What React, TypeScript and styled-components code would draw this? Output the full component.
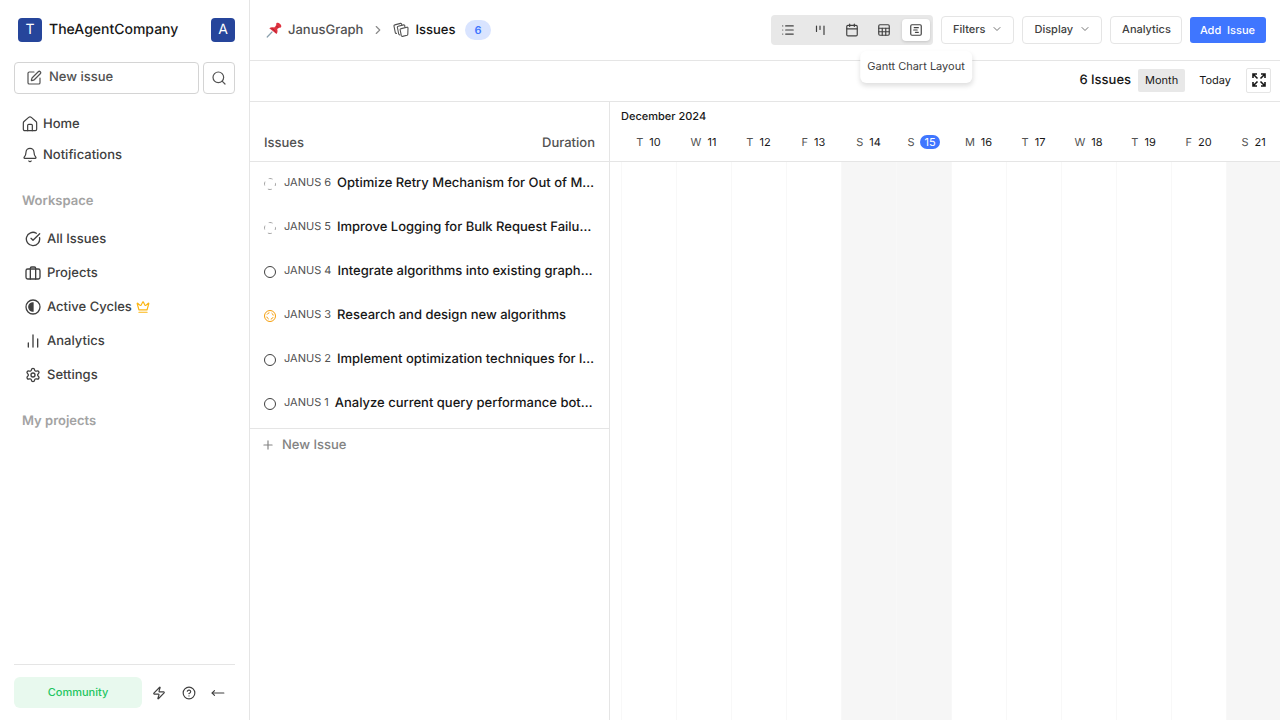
import React from "react";
import styled, { createGlobalStyle } from "styled-components";
import {
  SquarePen,
  Search,
  Bell,
  CircleCheckBig,
  ChartNoAxesColumn,
  Settings,
  Crown,
  Zap,
  CircleHelp,
  MoveLeft,
  ChevronRight,
  ChevronDown,
  List,
  Calendar,
  Sheet,
  SquareChartGantt,
  Plus,
} from "lucide-react";

const c = {
  line: "#e5e5e5",
  lineStrong: "#d4d4d4",
  text: "#171717",
  text2: "#404040",
  text3: "#525252",
  muted: "#a3a3a3",
  fill: "#e8e8e8",
  primary: "#3f76ff",
  navy: "#26459b",
};

const GlobalStyle = createGlobalStyle`
  *, *::before, *::after { box-sizing: border-box; }
  body { margin: 0; background: #fff; text-rendering: geometricPrecision; }
  body, button { font-family: Inter, "Liberation Sans", sans-serif; }
  body { font-size: 13px; line-height: 20px; font-weight: 500; color: ${c.text}; }
  button { font-size: 11px; line-height: 16px; font-weight: 500; cursor: pointer; padding: 0; border: 0; background: none; color: inherit; text-rendering: inherit; }
  a { color: inherit; text-decoration: none; }
  svg { display: block; flex: none; }
  h1, h2, p, ul, ol { margin: 0; padding: 0; font: inherit; list-style: none; }
`;

const Shell = styled.div`
  display: flex;
  min-height: 100vh;
`;

/* Sidebar */
const Sidebar = styled.aside`
  display: flex;
  flex-direction: column;
  flex: none;
  width: 250px;
  padding: 18px 14px 12px;
  border-right: 1px solid ${c.line};
`;
const WorkspaceBar = styled.div`
  display: flex;
  align-items: center;
  gap: 7px;
  height: 24px;
  padding-left: 4px;
`;
const WorkspaceName = styled.span`
  flex: 1;
  font-size: 14px;
`;
const Avatar = styled.button`
  width: 24px;
  height: 24px;
  border-radius: 4px;
  background: ${c.navy};
  color: #fff;
  font-size: 14px;
  font-weight: 400;
`;
const QuickActions = styled.div`
  display: flex;
  gap: 4px;
  margin-top: 20px;
`;
const OutlineButton = styled.button<{ $grow?: boolean }>`
  display: flex;
  align-items: center;
  justify-content: ${(p) => (p.$grow ? "flex-start" : "center")};
  gap: 7px;
  flex: ${(p) => (p.$grow ? "1" : "none")};
  width: 32px;
  height: 32px;
  padding: ${(p) => (p.$grow ? "0 11px" : "0")};
  border: 1px solid ${c.lineStrong};
  border-radius: 4px;
  color: ${c.text3};
  font-size: 13px;
  span { padding-bottom: 2px; }
`;
const NavList = styled.ul<{ $compact?: boolean }>`
  display: flex;
  flex-direction: column;
  gap: ${(p) => (p.$compact ? "3px" : "6px")};
  margin-top: ${(p) => (p.$compact ? "16px" : "14px")};
`;
const NavLink = styled.a<{ $compact?: boolean }>`
  display: flex;
  align-items: center;
  gap: ${(p) => (p.$compact ? "5px" : "6px")};
  height: 28px;
  padding-left: ${(p) => (p.$compact ? "8px" : "11px")};
  color: ${c.text2};
`;
const CycleLabel = styled.span`
  display: flex;
  align-items: center;
  gap: 4px;
`;
const SectionTitle = styled.h2`
  margin-top: 22px;
  padding-left: 8px;
  font-size: 13px;
  font-weight: 600;
  color: ${c.muted};
`;
const SidebarFooter = styled.footer`
  display: flex;
  align-items: center;
  margin-top: auto;
  padding: 12px 2px 0 0;
  border-top: 1px solid ${c.line};
`;
const PlanButton = styled.button`
  width: 128px;
  height: 31px;
  margin-right: 2px;
  padding-bottom: 1px;
  border-radius: 6px;
  background: #e8f9ee;
  color: #22c55e;
`;
const FooterButton = styled.button`
  display: grid;
  place-items: center;
  flex: 1;
  height: 28px;
  color: ${c.text2};
`;

/* Main */
const Main = styled.main`
  display: flex;
  flex-direction: column;
  flex: 1;
  min-width: 0;
`;
const Header = styled.header`
  display: flex;
  align-items: center;
  justify-content: space-between;
  height: 61px;
  padding: 0 14px 0 16px;
  border-bottom: 1px solid ${c.line};
`;
const Breadcrumbs = styled.nav`
  display: flex;
  align-items: center;
  gap: 8px;
`;
const Crumb = styled.a<{ $current?: boolean }>`
  display: flex;
  align-items: center;
  gap: 6px;
  color: ${(p) => (p.$current ? c.text : c.text3)};
  svg { color: ${c.text3}; }
`;
const CountBadge = styled.span`
  margin-left: 2px;
  padding: 0 9px;
  border-radius: 10px;
  background: #d9e4ff;
  color: ${c.primary};
  font-size: 11px;
  font-weight: 600;
`;
const Tools = styled.div`
  display: flex;
  align-items: center;
  gap: 8px;
`;
const LayoutSwitch = styled.div`
  display: flex;
  gap: 4px;
  padding: 4px 3px;
  border-radius: 4px;
  background: ${c.fill};
`;
const LayoutButton = styled.button<{ $active?: boolean }>`
  position: relative;
  display: grid;
  place-items: center;
  width: 28px;
  height: 22px;
  border-radius: 4px;
  background: ${(p) => (p.$active ? "#fff" : "transparent")};
  box-shadow: ${(p) => (p.$active ? "0 1px 3px rgba(0, 0, 0, 0.16)" : "none")};
  color: ${c.text2};
`;
const Tooltip = styled.span`
  position: absolute;
  top: 100%;
  left: 50%;
  z-index: 2;
  margin-top: 10px;
  padding: 7px 7px 9px;
  transform: translateX(-50%);
  border-radius: 6px;
  background: #fff;
  box-shadow: 0 3px 5px rgba(0, 0, 0, 0.13);
  color: ${c.text2};
  font-weight: 400;
  white-space: nowrap;
`;
const ToolButton = styled.button`
  display: flex;
  align-items: center;
  gap: 6px;
  height: 28px;
  padding: 0 10px 2px 11px;
  border: 1px solid ${c.line};
  border-radius: 4px;
  color: ${c.text2};
  svg { color: #737373; }
`;
const PrimaryButton = styled.button`
  height: 26px;
  padding: 0 11px 1px 10px;
  border-radius: 3px;
  background: ${c.primary};
  color: #fff;
  white-space: pre;
`;
const ChartBar = styled.div`
  display: flex;
  align-items: center;
  justify-content: flex-end;
  height: 41px;
  padding: 0 9px 2px 0;
  border-bottom: 1px solid ${c.line};
`;
const ScaleButton = styled.button<{ $active?: boolean }>`
  height: 23px;
  margin-left: 7px;
  padding: 0 7px;
  border-radius: 2px;
  background: ${(p) => (p.$active ? c.fill : "transparent")};
  font-weight: 400;
`;
const ExpandButton = styled.button`
  display: grid;
  place-items: center;
  width: 25px;
  height: 25px;
  margin-left: 8px;
  border: 1px solid ${c.line};
  border-radius: 2px;
`;
const Gantt = styled.div`
  display: flex;
  flex: 1;
`;
const IssuePane = styled.section`
  flex: none;
  width: 360px;
  border-right: 1px solid ${c.line};
`;
const PaneHead = styled.div`
  display: flex;
  align-items: flex-end;
  justify-content: space-between;
  height: 60px;
  padding: 0 14px 8px;
  border-bottom: 1px solid ${c.line};
  color: ${c.text3};
`;
const IssueRow = styled.a`
  display: flex;
  align-items: center;
  height: 44px;
  padding: 0 8px 3px 14px;
  svg { margin-top: 3px; }
`;
const IssueKey = styled.span`
  flex: none;
  margin: 0 6px 0 8px;
  padding-bottom: 1px;
  font-size: 11px;
  font-weight: 400;
  color: ${c.text3};
`;
const IssueTitle = styled.span`
  white-space: nowrap;
`;
const NewIssueButton = styled.button`
  display: flex;
  align-items: center;
  gap: 7px;
  width: 100%;
  height: 33px;
  margin-top: 2px;
  padding-left: 11px;
  border-top: 1px solid ${c.line};
  color: #838383;
  font-size: 13px;
`;
const Timeline = styled.section`
  display: flex;
  flex-direction: column;
  flex: 1;
  min-width: 0;
  overflow: hidden;
`;
const MonthLabel = styled.h2`
  height: 30px;
  padding: 4px 11px;
  font-size: 11px;
`;
const DayHeader = styled.ol`
  display: flex;
  height: 30px;
  padding-left: 11px;
  border-bottom: 1px solid ${c.line};
`;
const DayLabel = styled.li`
  display: flex;
  align-items: center;
  justify-content: center;
  gap: 6px;
  flex: none;
  width: 55px;
  padding-bottom: 9px;
  font-size: 11px;
  line-height: 14px;
  color: ${c.text3};
  font-weight: 400;
`;
const DayNumber = styled.span<{ $today?: boolean }>`
  padding: ${(p) => (p.$today ? "0 4px" : "0")};
  border-radius: 8px;
  background: ${(p) => (p.$today ? c.primary : "transparent")};
  color: ${(p) => (p.$today ? "#fff" : c.text)};
`;
const DayGrid = styled.div`
  display: flex;
  flex: 1;
  padding-left: 11px;
`;
const DayCell = styled.div<{ $weekend?: boolean }>`
  flex: none;
  width: 55px;
  border-left: 1px solid #f8f8f8;
  background: ${(p) => (p.$weekend ? "#f6f6f6" : "transparent")};
`;

/* Icons */
const HomeIcon = () => (
  <svg width="16" height="16" viewBox="0 0 24 24" fill="none" stroke="currentColor" strokeWidth="1.8" strokeLinecap="round" strokeLinejoin="round">
    <path d="M2 10.500a3 3 0 0 1 1-2.200l7-6.200a3 3 0 0 1 4 0l7 6.200a3 3 0 0 1 1 2.200V20a2 2 0 0 1-2 2H4a2 2 0 0 1-2-2Z" />
    <path d="M8.500 22v-8a1.500 1.500 0 0 1 1.500-1.500h4a1.500 1.500 0 0 1 1.500 1.500v8" />
  </svg>
);
const BriefcaseIcon = () => (
  <svg width="16" height="16" viewBox="0 0 24 24" fill="none" stroke="currentColor" strokeWidth="2" strokeLinecap="round" strokeLinejoin="round">
    <rect x="1.500" y="6" width="21" height="15" rx="2.500" />
    <path d="M16 21V5a2 2 0 0 0-2-2h-4a2 2 0 0 0-2 2v16" />
  </svg>
);
const ContrastIcon = () => (
  <svg width="16" height="16" viewBox="0 0 16 16" fill="none" stroke="currentColor" strokeWidth="1.300">
    <circle cx="8" cy="8" r="7" />
    <path d="M8 3.800a4.200 4.200 0 0 0 0 8.400Z" fill="currentColor" />
  </svg>
);
const PinIcon = () => (
  <svg width="16" height="16" viewBox="0 0 16 16">
    <path d="M6 10 1.200 15" stroke="#8aa0ad" strokeWidth="1.200" strokeLinecap="round" />
    <path d="M10.600 1.100c.9-.8 2.300-.3 3.500.8s1.600 2.500.8 3.400c-.6.6-1.400.6-2.100.3l-1.600 1.700c.6 1.800.4 3.600-.7 4.700L3.300 6.300c1.200-1.100 3-1.200 4.900-.7l2.300-2.300c-.5-.7-.4-1.700.1-2.200Z" fill="#e0323f" />
    <path d="M10.300 3.500c.4 1.200 1.300 2 2.500 2.300M5.500 6.400c1.700.6 3.600 2.400 4.300 4.200" stroke="#a8202f" strokeWidth=".9" fill="none" />
  </svg>
);
const LayersIcon = () => (
  <svg width="16" height="16" viewBox="0 0 16 16" fill="none" stroke="currentColor" strokeWidth="1.100" strokeLinejoin="round" strokeLinecap="round">
    <path d="M8.200 6.600 13.900 5.200a.9.900 0 0 1 1.100.9l-.2 6.200a1 1 0 0 1-.7.900l-4.600 1.200a1 1 0 0 1-1.200-.7L7.200 8a1 1 0 0 1 1-1.400Z" />
    <path d="M11.800 5V3.800a.9.900 0 0 0-1.100-.9L5.200 4.200a1 1 0 0 0-.8 1.300l1.300 6.500a1 1 0 0 0 1.200.8" />
    <path d="M8.700 2.800v-.5a.9.900 0 0 0-1.100-.9L1.800 2.900A1 1 0 0 0 1 4.100l1.300 6.500a1 1 0 0 0 1.200.8" />
  </svg>
);
const KanbanIcon = () => (
  <svg width="14" height="14" viewBox="0 0 14 14" stroke="currentColor" strokeWidth="1.200" strokeLinecap="round">
    <path d="M3.500 3v5.500M7 3v3.500M11 3v8.500" />
  </svg>
);
const ExpandIcon = () => (
  <svg width="14" height="14" viewBox="0 0 14 14" fill="none" stroke="currentColor" strokeWidth="1.600">
    <path d="M1 5V1h4M1.500 1.500l4 4M9 1h4v4M12.500 1.500l-4 4M1 9v4h4M1.500 12.500l4-4M13 9v4H9M12.500 12.500l-4-4" />
  </svg>
);

type State = "backlog" | "todo" | "started";
const StateIcon = ({ state }: { state: State }) => (
  <svg width="12" height="12" viewBox="0 0 12 12" fill="none" strokeWidth="1" stroke={state === "started" ? "#f59e0b" : state === "todo" ? c.text2 : c.muted}>
    <circle cx="6" cy="6" r="5.500" strokeDasharray={state === "backlog" ? "4 4.640" : undefined} strokeDashoffset={state === "backlog" ? 2 : undefined} />
    {state === "started" && <circle cx="6" cy="6" r="3.300" strokeDasharray="3 2.180" strokeDashoffset="4" />}
  </svg>
);

const issues: { key: string; title: string; state: State }[] = [
  { key: "JANUS 6", title: "Optimize Retry Mechanism for Out of M…", state: "backlog" },
  { key: "JANUS 5", title: "Improve Logging for Bulk Request Failu…", state: "backlog" },
  { key: "JANUS 4", title: "Integrate algorithms into existing graph…", state: "todo" },
  { key: "JANUS 3", title: "Research and design new algorithms", state: "started" },
  { key: "JANUS 2", title: "Implement optimization techniques for l…", state: "todo" },
  { key: "JANUS 1", title: "Analyze current query performance bot…", state: "todo" },
];
const weekdays = ["T", "W", "T", "F", "S", "S", "M", "T", "W", "T", "F", "S"];

export default function App() {
  return (
    <Shell>
      <GlobalStyle />
      <Sidebar>
        <WorkspaceBar>
          <Avatar>T</Avatar>
          <WorkspaceName>TheAgentCompany</WorkspaceName>
          <Avatar>A</Avatar>
        </WorkspaceBar>
        <QuickActions>
          <OutlineButton $grow>
            <SquarePen size={16} strokeWidth={1.8} />
            <span>New issue</span>
          </OutlineButton>
          <OutlineButton aria-label="Search">
            <Search size={16} strokeWidth={1.8} />
          </OutlineButton>
        </QuickActions>
        <nav>
          <NavList $compact>
            <li><NavLink href="#home" $compact><HomeIcon />Home</NavLink></li>
            <li><NavLink href="#notifications" $compact><Bell size={16} strokeWidth={1.8} />Notifications</NavLink></li>
          </NavList>
          <SectionTitle>Workspace</SectionTitle>
          <NavList>
            <li><NavLink href="#all"><CircleCheckBig size={16} />All Issues</NavLink></li>
            <li><NavLink href="#projects"><BriefcaseIcon />Projects</NavLink></li>
            <li><NavLink href="#cycles"><ContrastIcon /><CycleLabel>Active Cycles<Crown size={14} color="#fbb615" /></CycleLabel></NavLink></li>
            <li><NavLink href="#analytics"><ChartNoAxesColumn size={16} />Analytics</NavLink></li>
            <li><NavLink href="#settings"><Settings size={16} />Settings</NavLink></li>
          </NavList>
          <SectionTitle>My projects</SectionTitle>
        </nav>
        <SidebarFooter>
          <PlanButton>Community</PlanButton>
          <FooterButton aria-label="Shortcuts"><Zap size={14} /></FooterButton>
          <FooterButton aria-label="Help"><CircleHelp size={14} /></FooterButton>
          <FooterButton aria-label="Collapse sidebar"><MoveLeft size={14} /></FooterButton>
        </SidebarFooter>
      </Sidebar>

      <Main>
        <Header>
          <Breadcrumbs>
            <Crumb href="#project"><PinIcon />JanusGraph</Crumb>
            <ChevronRight size={14} color="#8a8a8a" />
            <Crumb href="#issues" $current><LayersIcon />Issues</Crumb>
            <CountBadge>6</CountBadge>
          </Breadcrumbs>
          <Tools>
            <LayoutSwitch>
              <LayoutButton aria-label="List layout"><List size={14} /></LayoutButton>
              <LayoutButton aria-label="Board layout"><KanbanIcon /></LayoutButton>
              <LayoutButton aria-label="Calendar layout"><Calendar size={14} /></LayoutButton>
              <LayoutButton aria-label="Spreadsheet layout"><Sheet size={14} /></LayoutButton>
              <LayoutButton $active>
                <SquareChartGantt size={14} />
                <Tooltip role="tooltip">Gantt Chart Layout</Tooltip>
              </LayoutButton>
            </LayoutSwitch>
            <ToolButton>Filters<ChevronDown size={12} /></ToolButton>
            <ToolButton>Display<ChevronDown size={12} /></ToolButton>
            <ToolButton>Analytics</ToolButton>
            <PrimaryButton>{"Add  Issue"}</PrimaryButton>
          </Tools>
        </Header>
        <ChartBar>
          <p>6 Issues</p>
          <ScaleButton $active>Month</ScaleButton>
          <ScaleButton>Today</ScaleButton>
          <ExpandButton aria-label="Full screen"><ExpandIcon /></ExpandButton>
        </ChartBar>
        <Gantt>
          <IssuePane>
            <PaneHead><span>Issues</span><span>Duration</span></PaneHead>
            {issues.map((issue) => (
              <IssueRow key={issue.key} href="#issue">
                <StateIcon state={issue.state} />
                <IssueKey>{issue.key}</IssueKey>
                <IssueTitle>{issue.title}</IssueTitle>
              </IssueRow>
            ))}
            <NewIssueButton><Plus size={14} />New Issue</NewIssueButton>
          </IssuePane>
          <Timeline>
            <MonthLabel>December 2024</MonthLabel>
            <DayHeader>
              {weekdays.map((day, i) => (
                <DayLabel key={i}>{day}<DayNumber $today={i === 5}>{i + 10}</DayNumber></DayLabel>
              ))}
            </DayHeader>
            <DayGrid>
              {weekdays.map((day, i) => (
                <DayCell key={i} $weekend={day === "S"} />
              ))}
            </DayGrid>
          </Timeline>
        </Gantt>
      </Main>
    </Shell>
  );
}
